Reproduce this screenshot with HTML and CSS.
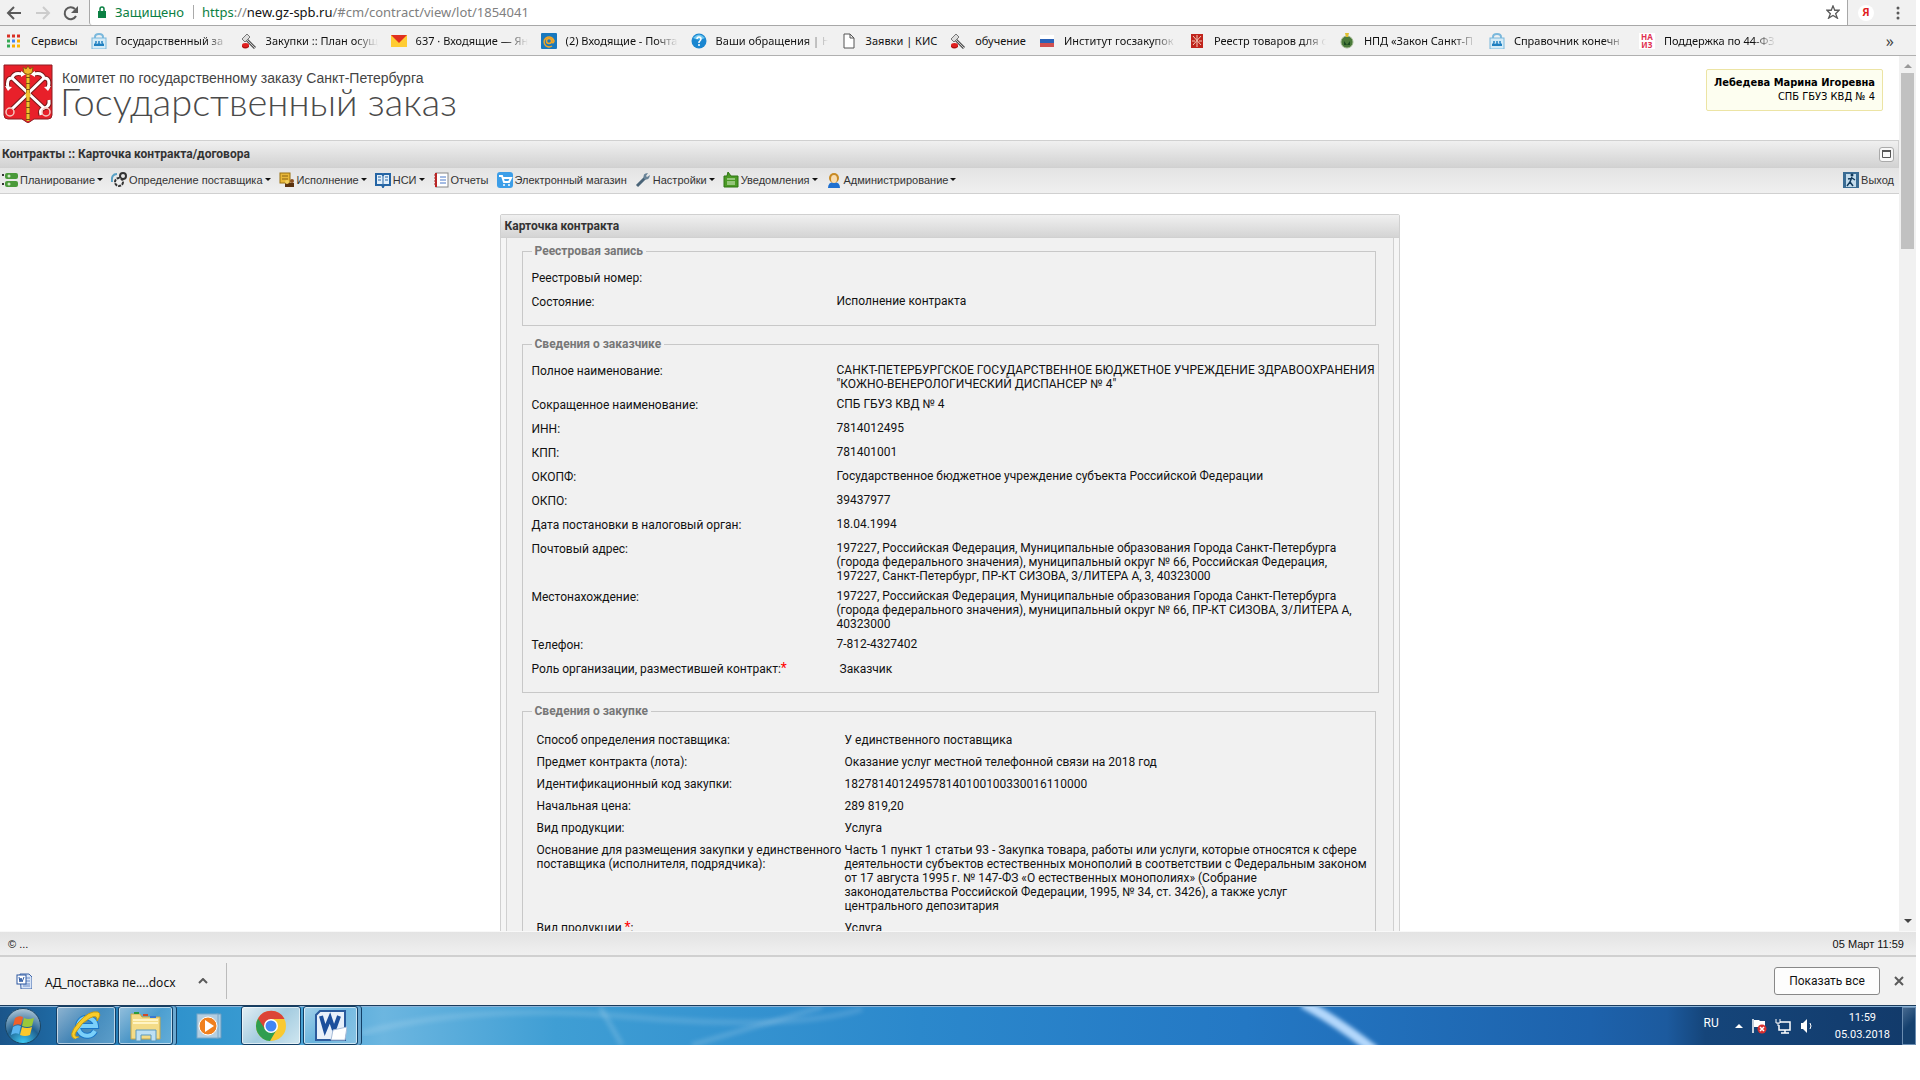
FILE: index.html
```html
<!DOCTYPE html>
<html lang="ru">

   <head>
      <meta charset="utf-8" />
      <title>Карточка контракта/договора</title>
      <link rel="stylesheet" href="styles.css">
   </head>

   <body>

      <!-- Shared icons -->
      <svg class="defs">
         <symbol id="gavel" viewBox="0 0 16 16">
            <path d="M6 7L14 15" stroke="#555" stroke-width="3"/>
            <path d="M6 7L14 15" stroke="#ccc" stroke-width="1"/>
            <path d="M1 6L6 1L9 4L4 9Z" fill="#ddd" stroke="#777"/>
            <path d="M1 12v2q3 3 7 0v-2z" fill="#b01010"/>
            <ellipse cx="4.500" cy="12" rx="3.500" ry="2" fill="#e02020"/>
         </symbol>
         <symbol id="bag" viewBox="0 0 16 16">
            <path d="M4 6V4q0-3 4-3t4 3v2" fill="none" stroke="#7ab8dc" stroke-width="2"/>
            <rect x="1" y="5" width="14" height="11" fill="#d4ebf7" stroke="#7ab8dc"/>
            <path d="M3 13v-2q2-2 3 0q2-2 4 0q1-2 3 0v2z" fill="#1e7fc0"/>
            <circle cx="5" cy="9" r="1" fill="#1e7fc0"/><circle cx="8" cy="9" r="1" fill="#1e7fc0"/><circle cx="11" cy="9" r="1" fill="#1e7fc0"/>
         </symbol>
         <symbol id="emblem" viewBox="0 0 50 59">
            <path d="M1 1H49V51Q49 55 45 55H31L25 59L19 55H5Q1 55 1 51Z" fill="#e8202a" stroke="#8e1c22"/>
            <path d="M5 24Q3 14 9 14L41 44M9 14Q11 8 19 10M41 44Q47 43 46 36M41 44Q36 46 38 51" fill="none" stroke="#7a1a1a" stroke-width="5"/>
            <path d="M45 24Q48 14 41 14L9 45M41 14Q39 8 31 10" fill="none" stroke="#7a1a1a" stroke-width="5"/>
            <path d="M45 24Q48 14 41 14L9 45M41 14Q39 8 31 10" fill="none" stroke="#fff" stroke-width="3"/>
            <path d="M5 24Q3 14 9 14L41 44M9 14Q11 8 19 10M41 44Q47 43 46 36M41 44Q36 46 38 51" fill="none" stroke="#fff" stroke-width="3"/>
            <path d="M2 22l3 5l4-4zM48 22l-3 5l-4-4zM18 7l5 3l-5 3zM32 7l-5 3l5 3z" fill="#fff"/>
            <circle cx="7" cy="48" r="4" fill="none" stroke="#f4c8c0" stroke-width="1.500"/>
            <circle cx="43" cy="48" r="4" fill="none" stroke="#f4c8c0" stroke-width="1.500"/>
            <path d="M25 8V57" stroke="#7a4a10" stroke-width="4"/>
            <path d="M25 8V57" stroke="#f2c12e" stroke-width="3" stroke-dasharray="5 1"/>
            <path d="M20 3L23 5L25 2L27 5L30 3L29 9Q25 12 21 9Z" fill="#f2b92a" stroke="#8a5a10"/>
            <circle cx="25" cy="31" r="2.500" fill="#f2c12e"/>
         </symbol>
         <symbol id="word" viewBox="0 0 16 16">
            <path d="M4 1h9l3 3v12H5z" fill="#d8e4f6" stroke="#3c64a8"/>
            <path d="M7 5h7M7 8h7M7 11h7M7 13h7" stroke="#6a8cc8"/>
            <rect x="1" y="2" width="9" height="9" fill="#fff" stroke="#2a56a0"/>
            <path d="M3 4l1 5l1-4l1 4l2-5" fill="none" stroke="#2a56a0"/>
         </symbol>
      </svg>

      <div class="screen">

         <!-- Browser toolbar -->
         <div class="toolbar">
            <button class="nav" aria-label="Назад"><svg width="16" height="16" viewBox="0 0 16 16"><path d="M15 8H2M8 2L2 8l6 6" fill="none" stroke="#5a5a5a" stroke-width="2"/></svg></button>
            <button class="nav" aria-label="Вперед"><svg width="16" height="16" viewBox="0 0 16 16"><path d="M1 8h13M8 2l6 6l-6 6" fill="none" stroke="#ccc" stroke-width="2"/></svg></button>
            <button class="nav" aria-label="Обновить"><svg width="16" height="16" viewBox="0 0 16 16"><path d="M13 11A6 6 0 1 1 12 4" fill="none" stroke="#5a5a5a" stroke-width="2"/><path d="M15 1v7H8z" fill="#5a5a5a"/></svg></button>
            <div class="address">
               <svg width="8" height="12" viewBox="0 0 8 12"><path d="M2 5V3a2 2 0 0 1 4 0v2" fill="none" stroke="#0b8043" stroke-width="1.500"/><rect y="5" width="8" height="7" fill="#0b8043"/></svg>
               <span class="secure">Защищено</span>
               <span class="url"><em>https</em>://<b>new.gz-spb.ru</b>/#cm/contract/view/lot/1854041</span>
               <button class="star" aria-label="Закладка"><svg width="14" height="14" viewBox="0 0 16 16"><path d="M8 1l2 5h5l-4 4l2 5l-5-3l-5 3l2-5l-4-4h5z" fill="none" stroke="#5a5a5a" stroke-width="1.500"/></svg></button>
            </div>
            <button class="yandex">Я</button>
            <button class="dots" aria-label="Меню"><svg width="4" height="14" viewBox="0 0 4 14"><circle cx="2" cy="2" r="1.500" fill="#5a5a5a"/><circle cx="2" cy="7" r="1.500" fill="#5a5a5a"/><circle cx="2" cy="12" r="1.500" fill="#5a5a5a"/></svg></button>
         </div>

         <nav class="bookmarks">
            <a href="#"><svg viewBox="0 0 16 16"><path d="M1 3h3M6 3h3M11 3h3" stroke="#d93025" stroke-width="3"/><path d="M1 8h3" stroke="#34a853" stroke-width="3"/><path d="M6 8h3" stroke="#4285f4" stroke-width="3"/><path d="M11 8h3M6 13h3" stroke="#f9ab00" stroke-width="3"/><path d="M1 13h3" stroke="#34a853" stroke-width="3"/><path d="M11 13h3" stroke="#fbbc04" stroke-width="3"/></svg><span>Сервисы</span></a>
            <a href="#"><svg><use href="#bag"/></svg><span class="cut">Государственный за</span></a>
            <a href="#"><svg><use href="#gavel"/></svg><span class="cut">Закупки :: План осущ</span></a>
            <a href="#"><svg viewBox="0 0 16 16"><rect y="2" width="16" height="12" fill="#fc3"/><path d="M0 2h16L8 10z" fill="#e03020"/></svg><span class="cut">637 · Входящие — Ян</span></a>
            <a href="#"><svg viewBox="0 0 16 16"><rect width="16" height="16" rx="1" fill="#1878be"/><circle cx="8" cy="8" r="2.500" fill="none" stroke="#f5a623" stroke-width="1.500"/><path d="M11 5v4q1 2 2-1A5 5 0 1 0 11 13" fill="none" stroke="#f5a623" stroke-width="1.500"/></svg><span class="cut">(2) Входящие - Почта</span></a>
            <a href="#"><svg viewBox="0 0 16 16"><circle cx="8" cy="8" r="7.500" fill="#1a86d0"/><path d="M2 5Q8-2 14 5Q8 8 2 5" fill="#6cc6f0"/><path d="M6 6q0-2 2-2t2 2q0 1-2 3v1M8 11v2" fill="none" stroke="#fff" stroke-width="1.500"/></svg><span class="cut">Ваши обращения | Н</span></a>
            <a href="#"><svg viewBox="0 0 16 16"><path d="M3 1h6l4 4v10H3zM9 1v4h4" fill="#fff" stroke="#555"/></svg><span>Заявки | КИС</span></a>
            <a href="#"><svg><use href="#gavel"/></svg><span>обучение</span></a>
            <a href="#"><svg viewBox="0 0 16 16"><path d="M1 2h14v4H1z" fill="#fff"/><path d="M1 6h14v4H1z" fill="#2a62b8"/><path d="M1 10h14v4H1z" fill="#d05050"/></svg><span class="cut">Институт госзакупок</span></a>
            <a href="#"><svg viewBox="0 0 16 16"><path d="M2 1h12v14H2z" fill="#c0241c"/><path d="M4 3l8 9M12 3l-8 9M8 2v12M3 8h3M10 8h3" stroke="#f2c8b8"/></svg><span class="cut">Реестр товаров для с</span></a>
            <a href="#"><svg viewBox="0 0 16 16"><circle cx="8" cy="9" r="6" fill="#4a7a3a" stroke="#a0b890"/><path d="M6 0h4l-1 4H7z" fill="#e0c030"/><path d="M5 8l3 4l3-4v4H5z" fill="#1a4a20"/></svg><span class="cut">НПД «Закон Санкт-П</span></a>
            <a href="#"><svg><use href="#bag"/></svg><span class="cut">Справочник конечн</span></a>
            <a href="#"><b class="naiz">НА<br>ИЗ</b><span class="cut">Поддержка по 44-ФЗ</span></a>
            <button class="more">»</button>
         </nav>

         <!-- Page with its scrollbar -->
         <div class="view">
            <div class="page">
               <header class="header">
                  <svg class="emblem" width="50" height="59"><use href="#emblem"/></svg>
                  <div>
                     <p class="committee">Комитет по государственному заказу Санкт-Петербурга</p>
                     <h1>Государственный заказ</h1>
                  </div>
                  <div class="user"><b>Лебедева Марина Игоревна</b><br>СПБ ГБУЗ КВД № 4</div>
               </header>

               <div class="titlebar">
                  <h2>Контракты :: Карточка контракта/договора</h2>
                  <button class="maximize" aria-label="Развернуть"><svg width="9" height="8" viewBox="0 0 9 8"><path d="M.5 1v6.500h8V1z" fill="none" stroke="#555"/><path d="M0 1h9" stroke="#555" stroke-width="2"/></svg></button>
               </div>

               <div class="menu">
                  <button class="drop"><svg viewBox="0 0 16 16"><path d="M0 3h2M0 12h2" stroke="#333" stroke-width="2"/><rect x="3" y="1" width="13" height="6" rx="2" fill="#4a9a3a"/><rect x="3" y="9" width="13" height="6" rx="2" fill="#4a9a3a"/><circle cx="7" cy="4" r="1.500" fill="#cfe8c4"/><circle cx="7" cy="12" r="1.500" fill="#cfe8c4"/></svg>Планирование</button>
                  <button class="drop"><svg viewBox="0 0 16 16"><path d="M1 10Q0 2 6 2" fill="none" stroke="#58a0c4" stroke-width="2"/><circle cx="12" cy="4" r="3" fill="none" stroke="#333" stroke-width="2"/><circle cx="8" cy="10" r="4" fill="#eee" stroke="#333" stroke-width="2" stroke-dasharray="3 1"/></svg>Определение поставщика</button>
                  <button class="drop"><svg viewBox="0 0 16 16"><rect x="1" y="1" width="10" height="10" fill="#e8b83a" stroke="#9a7010"/><path d="M3 4h6M3 7h6" stroke="#8a6010"/><path d="M6 13h9" stroke="#5a3210" stroke-width="4"/><circle cx="8" cy="10" r="2" fill="#f2d060"/><circle cx="13" cy="9" r="2" fill="#8a5020"/></svg>Исполнение</button>
                  <button class="drop"><svg viewBox="0 0 16 16"><path d="M1 2h6l1 1l1-1h6v11H9l-1 2l-1-2H1z" fill="#e4f0fa" stroke="#2464a4" stroke-width="2"/><path d="M8 3v11M3 5h3M3 8h3M10 5h3M10 8h3" stroke="#2464a4"/></svg>НСИ</button>
                  <button><svg viewBox="0 0 16 16"><rect x="3" y="1" width="12" height="14" fill="#fff" stroke="#888"/><path d="M3 1v14" stroke="#c02020" stroke-width="2"/><path d="M1 3h3M1 6h3M1 9h3M1 12h3" stroke="#a33"/><path d="M7 5h6M7 8h6M7 11h6" stroke="#4a78c8"/></svg>Отчеты</button>
                  <button><svg viewBox="0 0 16 16"><rect width="16" height="16" rx="3" fill="#3c9ee8"/><path d="M2 4h3l2 6h5l2-4H6" fill="none" stroke="#fff" stroke-width="2"/><circle cx="7" cy="13" r="1" fill="#fff"/><circle cx="12" cy="13" r="1" fill="#fff"/></svg>Электронный магазин</button>
                  <button class="drop"><svg viewBox="0 0 16 16"><path d="M2 14L10 6" stroke="#4a6478" stroke-width="3"/><path d="M13 1q-6 0-4 6q5 2 6-4l-3 2l-1-1z" fill="#6a8498"/></svg>Настройки</button>
                  <button class="drop"><svg viewBox="0 0 16 16"><path d="M1 4h3L5 0l3 4h7v11H1z" fill="#4a9a24" stroke="#2f7414"/><path d="M4 7h8M4 10h8M4 12h8" stroke="#dff0d0"/></svg>Уведомления</button>
                  <button class="drop"><svg viewBox="0 0 16 16"><path d="M2 16q0-6 6-6t6 6z" fill="#1f70d0"/><circle cx="8" cy="6" r="5" fill="#c88a24"/><ellipse cx="8" cy="7" rx="3" ry="4" fill="#f8dcb0"/></svg>Администрирование</button>
                  <button class="exit"><svg viewBox="0 0 16 16"><rect width="16" height="16" fill="#3a6c94"/><path d="M3 2h10v13H3z" fill="#c4dcec"/><circle cx="9" cy="3" r="1.500" fill="#123a5c"/><path d="M9 5L7 10L4 14M7 10l3 4M5 7l4-1l3 2" fill="none" stroke="#123a5c" stroke-width="1.500"/></svg>Выход</button>
               </div>

               <main class="card">
                  <h3>Карточка контракта</h3>
                  <div class="cardbody">

                     <fieldset>
                        <legend>Реестровая запись</legend>
                        <table>
                           <tr><th>Реестровый номер:</th><td></td></tr>
                           <tr><th>Состояние:</th><td>Исполнение контракта</td></tr>
                        </table>
                     </fieldset>

                     <fieldset class="wide">
                        <legend>Сведения о заказчике</legend>
                        <table>
                           <tr><th>Полное наименование:</th><td>САНКТ-ПЕТЕРБУРГСКОЕ ГОСУДАРСТВЕННОЕ БЮДЖЕТНОЕ УЧРЕЖДЕНИЕ ЗДРАВООХРАНЕНИЯ "КОЖНО-ВЕНЕРОЛОГИЧЕСКИЙ ДИСПАНСЕР № 4"</td></tr>
                           <tr><th>Сокращенное наименование:</th><td>СПБ ГБУЗ КВД № 4</td></tr>
                           <tr><th>ИНН:</th><td>7814012495</td></tr>
                           <tr><th>КПП:</th><td>781401001</td></tr>
                           <tr><th>ОКОПФ:</th><td>Государственное бюджетное учреждение субъекта Российской Федерации</td></tr>
                           <tr><th>ОКПО:</th><td>39437977</td></tr>
                           <tr><th>Дата постановки в налоговый орган:</th><td>18.04.1994</td></tr>
                           <tr><th>Почтовый адрес:</th><td>197227, Российская Федерация, Муниципальные образования Города Санкт-Петербурга (города федерального значения), муниципальный округ № 66, Российская Федерация,<br>197227, Санкт-Петербург, ПР-КТ СИЗОВА, 3/ЛИТЕРА А, 3, 40323000</td></tr>
                           <tr><th>Местонахождение:</th><td>197227, Российская Федерация, Муниципальные образования Города Санкт-Петербурга (города федерального значения), муниципальный округ № 66, ПР-КТ СИЗОВА, 3/ЛИТЕРА А, 40323000</td></tr>
                           <tr><th>Телефон:</th><td>7-812-4327402</td></tr>
                           <tr><th>Роль организации, разместившей контракт:<i>*</i></th><td class="role">Заказчик</td></tr>
                        </table>
                     </fieldset>

                     <fieldset class="purchase">
                        <legend>Сведения о закупке</legend>
                        <table>
                           <tr><th>Способ определения поставщика:</th><td>У единственного поставщика</td></tr>
                           <tr><th>Предмет контракта (лота):</th><td>Оказание услуг местной телефонной связи на 2018 год</td></tr>
                           <tr><th>Идентификационный код закупки:</th><td>182781401249578140100100330016110000</td></tr>
                           <tr><th>Начальная цена:</th><td>289 819,20</td></tr>
                           <tr><th>Вид продукции:</th><td>Услуга</td></tr>
                           <tr><th>Основание для размещения закупки у единственного поставщика (исполнителя, подрядчика):</th><td>Часть 1 пункт 1 статьи 93 - Закупка товара, работы или услуги, которые относятся к сфере деятельности субъектов естественных монополий в соответствии с Федеральным законом от 17 августа 1995 г. № 147-ФЗ «О естественных монополиях» (Собрание<br>законодательства Российской Федерации, 1995, № 34, ст. 3426), а также услуг<br>центрального депозитария</td></tr>
                           <tr><th>Вид продукции <i>*</i>:</th><td>Услуга</td></tr>
                        </table>
                     </fieldset>

                  </div>
               </main>
            </div>

            <div class="scrollbar">
               <svg width="8" height="4" viewBox="0 0 8 4"><path d="M0 4l4-4l4 4z" fill="#999"/></svg>
               <div class="thumb"></div>
               <svg width="8" height="4" viewBox="0 0 8 4"><path d="M0 0h8l-4 4z" fill="#444"/></svg>
            </div>
         </div>

         <footer class="status"><span>© ...</span><span>05 Март 11:59</span></footer>

         <!-- Downloads -->
         <div class="downloads">
            <button class="file"><svg width="16" height="16"><use href="#word"/></svg><span>АД_поставка пе....docx</span><svg width="10" height="6" viewBox="0 0 10 6"><path d="M1 5l4-4l4 4" fill="none" stroke="#5a5a5a" stroke-width="2"/></svg></button>
            <button class="showall">Показать все</button>
            <button class="close" aria-label="Закрыть"><svg width="10" height="10" viewBox="0 0 10 10"><path d="M1 1l8 8M9 1l-8 8" stroke="#5a5a5a" stroke-width="2"/></svg></button>
         </div>

         <!-- Windows taskbar -->
         <div class="taskbar">
            <svg class="swoosh" width="1200" height="38" viewBox="0 0 1200 38">
               <defs><filter id="soft"><feGaussianBlur stdDeviation="2"/></filter></defs>
               <path d="M0 26Q110-4 270 10T500 2" fill="none" stroke="#fff" stroke-width="6" opacity=".12" filter="url(#soft)"/>
               <path d="M238 0L260 38M460 0L330 38" stroke="#fff" stroke-width="5" opacity=".15" filter="url(#soft)"/>
               <path d="M941-4Q975 14 1013 44" fill="none" stroke="#b4d8fc" stroke-width="10" filter="url(#soft)"/>
            </svg>
            <button class="start" aria-label="Пуск"><svg width="38" height="38" viewBox="0 0 38 38">
               <defs><radialGradient id="orb" cy="1" r="1"><stop offset="0" stop-color="#3fd0f8"/><stop offset=".5" stop-color="#1f6090"/><stop offset="1" stop-color="#b0c8d8"/></radialGradient></defs>
               <circle cx="19" cy="19" r="17.500" fill="url(#orb)" stroke="#1a4564"/>
               <path d="M11 11q4-3 8-1l-2 8q-4-2-8 1z" fill="#f0602a"/><path d="M20 11q4 2 10 0l-2 8q-5 2-10 0z" fill="#9ac83a"/>
               <path d="M9 20q4-3 8-1l-2 8q-4-2-8 1z" fill="#5ab4f0"/><path d="M18 20q5 2 10 0l-2 8q-5 2-10 0z" fill="#fcc82a"/>
            </svg></button>
            <button class="task" aria-label="Internet Explorer"><svg width="32" height="32" viewBox="0 0 32 32"><path d="M25 21A9 9 0 1 1 26 16H9" fill="none" stroke="#1876c8" stroke-width="6"/><path d="M25 21A9 9 0 1 1 26 16H9" fill="none" stroke="#7ad0fa" stroke-width="4"/><path d="M5 29Q-3 26 8 13T28 2Q32 4 27 11Q28 4 20 8T6 22Q3 27 9 27" fill="#f8cc2a" stroke="#c89a10"/></svg></button>
            <button class="task many" aria-label="Проводник"><svg width="32" height="32" viewBox="0 0 32 32"><path d="M1 4h9l2 3h18v22H1z" fill="#f4dc88" stroke="#c8a848"/><path d="M3 10h25M3 13h25" stroke="#fff4c4" stroke-width="2"/><path d="M4 3h5" stroke="#2a9a3a" stroke-width="2"/><path d="M13 5h5" stroke="#d04a2a" stroke-width="2"/><path d="M20 7h6" stroke="#3a7ad0" stroke-width="2"/><path d="M6 31V20h20v11h-5v-6H11v6z" fill="#bce0f4" stroke="#5a98bc"/></svg></button>
            <button class="task plain" aria-label="Проигрыватель"><svg width="28" height="28" viewBox="0 0 28 28"><path d="M20 2h5v24h-5z" fill="#a8cce4" stroke="#6a9cc0"/><rect x="1" y="2" width="21" height="24" fill="#b4cee0" stroke="#7aa8c8"/><circle cx="12" cy="14" r="9" fill="#f0801e" stroke="#fff"/><path d="M9 8v12l9-6z" fill="#fff"/></svg></button>
            <button class="task active" aria-label="Chrome"><svg width="32" height="32" viewBox="0 0 32 32"><circle cx="16" cy="16" r="15" fill="#f9c932"/><path d="M16 16L3 8.500A15 15 0 0 0 15 31L22 19z" fill="#2f9e4f"/><path d="M3 8.500A15 15 0 0 1 29.500 9H16L10 19z" fill="#dc4437"/><circle cx="16" cy="16" r="7" fill="#fff"/><circle cx="16" cy="16" r="5.500" fill="#4285f4"/></svg></button>
            <button class="task many" aria-label="Word"><svg width="32" height="32" viewBox="0 0 32 32"><path d="M5 1h25v29H1V5z" fill="#e8f0fa" stroke="#2a5a9c" stroke-width="2"/><path d="M6 6l4 14l5-12l4 12l5-14" fill="none" stroke="#1c4f9c" stroke-width="4"/><path d="M18 20l14-3l-2 13H16z" fill="#fff" stroke="#a8bcd8"/></svg></button>
            <div class="tray">
               <span class="lang">RU</span>
               <svg width="8" height="4" viewBox="0 0 8 4"><path d="M0 4l4-4l4 4z" fill="#fff"/></svg>
               <svg width="16" height="16" viewBox="0 0 16 16"><path d="M2 1v14" stroke="#fff" stroke-width="1.500"/><path d="M3 2h5l1 1h5v6H3z" fill="#fff"/><circle cx="11" cy="11" r="4.500" fill="#d83030"/><path d="M9 9l4 4M13 9l-4 4" stroke="#fff" stroke-width="1.500"/></svg>
               <svg width="16" height="16" viewBox="0 0 16 16"><path d="M5 4h10v8H4V7M6 15h8M10 12v3" fill="none" stroke="#fff" stroke-width="1.500"/><path d="M1 1v4h4V1M3 5v3" fill="none" stroke="#fff"/></svg>
               <svg width="16" height="16" viewBox="0 0 16 16"><path d="M2 5h2l4-4v14l-4-4H2z" fill="#fff"/><path d="M11 5q2 3 0 6" fill="none" stroke="#fff"/></svg>
               <time>11:59<br>05.03.2018</time>
            </div>
            <button class="peek" aria-label="Показать рабочий стол"></button>
         </div>

      </div>

   </body>

</html>
```

FILE: styles.css
```css
* {box-sizing:border-box;}
body {margin:0; background:#fff; color:#111; font-family:Roboto,sans-serif; font-size:12px; line-height:14px;}
h1, h2, h3, p {margin:0;}
button {border:0; padding:0; background:none; color:inherit; font:inherit; line-height:inherit;}
a {color:inherit; text-decoration:none;}
svg {display:block; flex:none;}
.defs {position:absolute; width:0; height:0;}
.screen {display:flex; flex-direction:column; height:calc(100vh - 35px); margin-right:4px;}

/* browser toolbar */
.toolbar {display:flex; flex:none; height:26px; background:#f1f1f1; border-bottom:1px solid #a8a8a8;}
.nav {display:flex; align-items:center; width:28px; padding-left:6px;}
.nav + .nav {padding-left:7px;}
.address {display:flex; flex:1; align-items:center; margin-left:5px; padding:0 7px 2px 8px; background:#fff; border:solid #a8a8a8; border-width:0 1px; border-bottom-left-radius:3px; font-family:"Noto Sans",sans-serif; font-size:13px;}
.secure {margin-left:9px; padding-right:9px; border-right:1px solid #aaa; color:#0b8043;}
.url {margin-left:8px; color:#808080;}
.url em {color:#0b8043; font-style:normal;}
.url b {color:#111; font-weight:normal;}
.star {margin-left:auto;}
.yandex {align-self:center; width:16px; height:16px; margin-left:10px; border-radius:8px; background:#fff; color:#e02020; font-size:11px; font-weight:bold;}
.dots {display:flex; align-items:center; margin:0 16px 0 22px;}

.bookmarks {display:flex; flex:none; gap:13px; align-items:center; height:30px; padding:0 22px 0 6px; background:#f1f1f1; border-bottom:1px solid #b0b0b0; font-family:"Noto Sans",sans-serif; font-size:11px;}
.bookmarks a {display:flex; align-items:center; gap:9px; white-space:nowrap;}
.bookmarks svg, .naiz {width:16px; height:16px;}
.bookmarks .cut {width:112px; -webkit-mask-image:linear-gradient(90deg,#000 80%,transparent); mask-image:linear-gradient(90deg,#000 80%,transparent);}
.naiz {background:#fff; color:#e03050; font-size:8px; line-height:8px; text-align:center;}
.more {margin-left:auto; font-size:16px; color:#444;}

/* page */
.view {display:flex; flex:1; min-height:0;}
.page {flex:1; overflow:hidden;}
.scrollbar {display:flex; flex-direction:column; align-items:center; width:17px; padding:8px 0; background:#f1f1f1;}
.thumb {width:13px; height:176px; margin:5px 0 auto; background:#c1c1c1;}
.header {display:flex; align-items:flex-start; height:84px; padding:8px 16px 0 3px;}
.committee {padding:5px 0 0 9px; color:#444; font-family:"Liberation Sans",sans-serif; font-size:14px; line-height:18px;}
h1 {padding-left:7px; color:#4a4a4a; font-family:Lato,sans-serif; font-size:38px; font-weight:300; line-height:28px;}
.user {margin:5px 0 0 auto; padding:6px 7px; height:42px; border:1px solid #ece4a4; border-radius:2px; background:#fdfef0; font-family:"DejaVu Sans Condensed",sans-serif; font-size:11px; text-align:right; color:#000;}
.titlebar {display:flex; align-items:center; justify-content:space-between; height:28px; padding:0 4px 0 2px; border:solid #d0d0d0; border-width:1px 1px 1px 0; background:linear-gradient(#f0f0f0,#d2d2d2); color:#333;}
h2, h3 {font-size:12px; line-height:14px;}
.maximize {display:grid; place-items:center; width:15px; height:15px; border:1px solid #aaa; border-radius:3px; background:#f8f8f8;}
.menu {display:flex; align-items:center; gap:8px; height:26px; padding:0 5px 2px 2px; border-bottom:1px solid #d0d0d0; background:linear-gradient(#e3e3e3,#f0f0f0); color:#333; font-family:"Liberation Sans",sans-serif; font-size:11px;}
.menu button {display:flex; align-items:center; gap:2px;}
.menu svg {width:16px; height:16px;}
.drop::after {content:""; border:3px solid transparent; border-top-color:#111; border-bottom:0;}
.menu .exit {margin-left:auto;}

/* contract card */
.card {width:900px; margin:20px auto 0; border:1px solid #d0d0d0; border-radius:2px 2px 0 0; background:#f5f5f5;}
.page {padding-right:0;}
h3 {padding:4px 4px 4px; border-bottom:1px solid #d0d0d0; background:linear-gradient(#f0f0f0,#d4d4d4); color:#333;}
.cardbody {margin:0 5px; padding:6px 15px; border:solid #d0d0d0; border-width:0 1px; background:#f1f1f1;}
fieldset {width:854px; margin:0 0 11px; padding:9px 0 10px 9px; border:1px solid #c8c8c8;}
fieldset.wide {width:857px;}
legend {padding:0 3px; color:#777; font-weight:bold;}
table {width:843px; table-layout:fixed; border-collapse:collapse;}
.wide table {width:846px;}
tr {height:24px;}
th, td {padding:3px 0; vertical-align:top; text-align:left;}
th {width:305px; padding-top:4px; padding-bottom:2px; font-weight:normal;}
i {color:#f00; font-style:normal; font-size:14px; line-height:12px;}
td.role {padding:4px 0 2px 3px;}
.purchase {padding-top:11px;}
.purchase table {width:835px; margin-left:5px;}
.purchase tr {height:22px;}
.purchase th, .purchase td {padding:4px 0;}
.purchase th {width:308px;}

.status {display:flex; flex:none; align-items:center; justify-content:space-between; height:26px; padding:0 12px 0 8px; border-top:1px solid #f8f8f8; border-bottom:2px solid #d0d0d0; background:linear-gradient(#e3e3e3,#f0f0f0); font-family:"Liberation Sans",sans-serif; font-size:11px;}

/* downloads */
.downloads {display:flex; flex:none; align-items:center; height:48px; padding:0 12px 0 16px; background:#f1f1f1; font-family:"Noto Sans",sans-serif;}
.file {display:flex; align-items:center; height:36px; padding-right:18px; border-right:1px solid #bbb;}
.file span {width:134px; margin:4px 19px 0 13px; text-align:left;}
.showall {width:106px; height:28px; margin-left:auto; border:1px solid #888; border-radius:3px; background:#fdfdfd; font-family:Roboto,sans-serif;}
.close {margin-left:14px;}

/* taskbar */
.taskbar {position:relative; display:flex; flex:none; height:40px; overflow:hidden; border-top:1px solid #1c3c5c; box-shadow:inset 0 1px #8cb4d8;
   background:linear-gradient(90deg,#1a558a 0,#1f6aa4 3%,#2f92cc 9%,#3a9cd2 14%,#6cb6e0 20%,#3f9ed4 29%,#2b88cc 48%,#2478c4 65%,#1d62ac 83%,#1c5a9e 87%,#15457a 89%,#123a6a 100%);}
.swoosh {position:absolute; left:362px; top:1px; pointer-events:none;}
.start {width:56px; padding-left:4px;}
.task {display:grid; place-items:center; width:60px; height:39px; margin-right:2px; border:1px solid #123f66; border-radius:3px; background:linear-gradient(135deg,rgba(255,255,255,.5),rgba(255,255,255,.15) 50%,rgba(255,255,255,.25)); box-shadow:inset 0 0 0 1px rgba(255,255,255,.6);}
.many {width:55px; margin-right:8px; box-shadow:inset 0 0 0 1px rgba(255,255,255,.6),3px 0 #6aa8d0,4px 0 #123f66;}
.plain {width:58px; border-color:transparent; background:none; box-shadow:none;}
.active {background:linear-gradient(135deg,#e4eff4,#a4cce0 50%,#cfe6f0);}
.tray {display:flex; align-items:center; gap:8px; margin-left:auto; color:#fff;}
.tray .lang {margin:0 8px 6px 0;}
.tray time {margin:0 12px 0 12px; font-size:11px; line-height:17px; text-align:center;}
.peek {width:14px; margin-top:1px; border:1px solid #6a8cb0; background:linear-gradient(135deg,#46698f,#15406e 50%);}
```
